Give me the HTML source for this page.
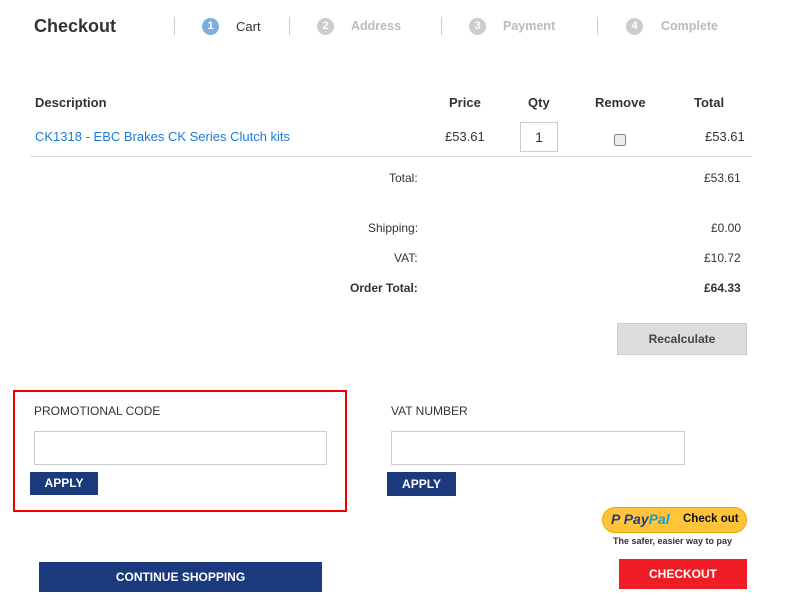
<!DOCTYPE html>
<html><head><style>
*{margin:0;padding:0;box-sizing:border-box}
body{width:785px;height:603px;background:#fff;font-family:"Liberation Sans",Arial,sans-serif;color:#333;position:relative;overflow:hidden;font-size:13px}
.a{position:absolute;white-space:nowrap}
.sep{position:absolute;top:17px;width:1px;height:18px;background:#ccc}
.num{position:absolute;top:18px;width:17px;height:17px;border-radius:50%;background:#ccc;color:#fff;font-size:11px;font-weight:bold;text-align:center;line-height:17px}
.step{position:absolute;top:19px;font-size:12.5px;color:#bbb;font-weight:bold}
.h{font-weight:bold;font-size:13px;color:#333}
.btn{position:absolute;background:#1b3a7d;color:#fff;font-weight:bold;font-size:12px;text-align:center}
</style></head><body>
<div class="a" style="left:34px;top:16px;font-size:18px;font-weight:bold;color:#333">Checkout</div>
<div class="sep" style="left:174px"></div>
<div class="num" style="left:202px;background:#7aafdf">1</div><div class="step" style="left:236px;color:#333;font-weight:normal;font-size:13px">Cart</div>
<div class="sep" style="left:289px"></div>
<div class="num" style="left:317px">2</div><div class="step" style="left:351px">Address</div>
<div class="sep" style="left:441px"></div>
<div class="num" style="left:469px">3</div><div class="step" style="left:503px">Payment</div>
<div class="sep" style="left:597px"></div>
<div class="num" style="left:626px">4</div><div class="step" style="left:661px">Complete</div>

<div class="a h" style="left:35px;top:95px">Description</div>
<div class="a h" style="left:449px;top:95px">Price</div>
<div class="a h" style="left:528px;top:95px">Qty</div>
<div class="a h" style="left:595px;top:95px">Remove</div>
<div class="a h" style="left:694px;top:95px">Total</div>
<div class="a" style="left:35px;top:129px;color:#1a7bde">CK1318 - EBC Brakes CK Series Clutch kits</div>
<div class="a" style="left:445px;top:129px">£53.61</div>
<div class="a" style="left:520px;top:122px;width:38px;height:30px;border:1px solid #ccc;text-align:center;line-height:28px;font-size:14px">1</div>
<div class="a" style="left:614px;top:134px;width:12px;height:12px;border:1px solid #888;border-radius:2px;background:#eee"></div>
<div class="a" style="left:705px;top:129px">£53.61</div>
<div class="a" style="left:30px;top:156px;width:722px;height:1px;background:#ddd"></div>

<div class="a" style="left:389px;top:171px;font-size:12px">Total:</div>
<div class="a" style="left:704px;top:171px;font-size:12px">£53.61</div>
<div class="a" style="left:368px;top:221px;font-size:12px">Shipping:</div>
<div class="a" style="left:711px;top:221px;font-size:12px">£0.00</div>
<div class="a" style="left:394px;top:251px;font-size:12px">VAT:</div>
<div class="a" style="left:704px;top:251px;font-size:12px">£10.72</div>
<div class="a" style="left:350px;top:281px;font-size:12px;font-weight:bold">Order Total:</div>
<div class="a" style="left:704px;top:281px;font-size:12px;font-weight:bold">£64.33</div>
<div class="a" style="left:617px;top:323px;width:130px;height:32px;background:#ddd;border:1px solid #ccc;text-align:center;line-height:30px;font-weight:bold;font-size:12px;color:#444">Recalculate</div>

<div class="a" style="left:13px;top:390px;width:334px;height:122px;border:2px solid #e00"></div>
<div class="a" style="left:34px;top:404px;font-size:12px">PROMOTIONAL CODE</div>
<div class="a" style="left:34px;top:431px;width:293px;height:34px;border:1px solid #ccc"></div>
<div class="btn" style="left:30px;top:472px;width:68px;height:23px;line-height:23px">APPLY</div>
<div class="a" style="left:391px;top:404px;font-size:12px">VAT NUMBER</div>
<div class="a" style="left:391px;top:431px;width:294px;height:34px;border:1px solid #ccc"></div>
<div class="btn" style="left:387px;top:472px;width:69px;height:24px;line-height:24px">APPLY</div>

<div class="a" style="left:602px;top:507px;width:145px;height:26px;border-radius:13px;background:#ffc439;border:1px solid #e8a900"></div>
<div class="a" style="left:611px;top:511px;font-size:14px;font-weight:bold;font-style:italic;color:#253b80">P <span>Pay</span><span style="color:#179bd7">Pal</span></div>
<div class="a" style="left:683px;top:513px;font-size:11.5px;font-weight:bold;color:#111">Check out</div>
<div class="a" style="left:613px;top:536px;font-size:9px;font-weight:bold;color:#333">The safer, easier way to pay</div>
<div class="a" style="left:619px;top:559px;width:128px;height:30px;background:#ee1c25;color:#fff;font-weight:bold;font-size:12px;text-align:center;line-height:30px">CHECKOUT</div>
<div class="btn" style="left:39px;top:562px;width:283px;height:30px;line-height:30px">CONTINUE SHOPPING</div>
</body></html>
